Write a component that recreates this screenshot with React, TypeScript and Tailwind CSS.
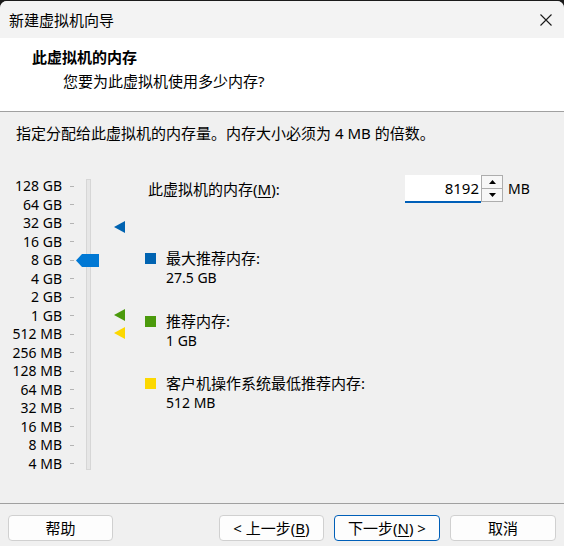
import React from "react";

const font = { fontFamily: '"Noto Sans", "Noto Sans CJK SC", sans-serif' };

const scale = [
  "128 GB", "64 GB", "32 GB", "16 GB", "8 GB", "4 GB", "2 GB", "1 GB",
  "512 MB", "256 MB", "128 MB", "64 MB", "32 MB", "16 MB", "8 MB", "4 MB",
];

function Tri({ color, top }: { color: string; top: string }) {
  return (
    <svg className={`absolute left-[114px] ${top}`} width="11" height="12" viewBox="0 0 11 12">
      <polygon points="0,6 11,0 11,12" fill={color} />
    </svg>
  );
}

function Legend({ color, label, value, mt }: { color: string; label: string; value: string; mt: string }) {
  return (
    <div className={`flex ${mt}`}>
      <div className={`w-[11px] h-[11px] mt-[5px] ${color}`} />
      <div className="ml-[10px] flex flex-col">
        <div className="h-[20px] leading-[20px]">{label}</div>
        <div className="h-[20px] leading-[20px] text-[14px]">{value}</div>
      </div>
    </div>
  );
}

function Btn({ children, w, primary }: { children: React.ReactNode; w: string; primary?: boolean }) {
  return (
    <div
      className={`${w} h-[26px] rounded-[4px] border ${
        primary ? "border-[#005fb8]" : "border-[#d0d0d0]"
      } bg-[#fdfdfd] flex items-center justify-center leading-[20px]`}
    >
      {children}
    </div>
  );
}

export default function App() {
  return (
    <div className="w-[564px] h-[546px] bg-[#1a1a1a] overflow-hidden text-[15px] text-black" style={font}>
      <div className="mt-px h-[545px] rounded-t-[7px] overflow-hidden bg-[#f0f0f0] flex flex-col">
        {/* title bar */}
        <div className="h-[37px] bg-[#f3f3f3] flex items-center justify-between pl-[9px]">
          <span className="leading-[20px]">新建虚拟机向导</span>
          <div className="w-[36px] h-full flex items-center justify-center">
            <svg width="12" height="12" viewBox="0 0 12 12">
              <path d="M0.5 0.5 L11.5 11.5 M11.5 0.5 L0.5 11.5" stroke="#1a1a1a" strokeWidth="1.1" />
            </svg>
          </div>
        </div>
        {/* header */}
        <div className="h-[74px] bg-white border-b border-[#a0a0a0] pt-[9px] flex flex-col">
          <div className="pl-[32px] font-bold leading-[20px]">此虚拟机的内存</div>
          <div className="pl-[63px] mt-[4px] leading-[20px]">您要为此虚拟机使用多少内存?</div>
        </div>
        {/* body */}
        <div className="flex-1 flex flex-col">
          <div className="pl-[16px] pt-[11px] leading-[20px]">
            指定分配给此虚拟机的内存量。内存大小必须为 4 MB 的倍数。
          </div>
          <div className="mt-[32px] flex">
            {/* scale */}
            <div className="relative w-[145px] pt-[2px]">
              <div className="flex flex-col">
                {scale.map((s) => (
                  <div key={s} className="h-[18.5px] flex items-center">
                    <span className="w-[62px] text-right text-[14px] leading-[18px] whitespace-nowrap">{s}</span>
                    <span className="ml-[8px] w-[4px] h-px bg-[#b4b4b4]" />
                  </div>
                ))}
              </div>
              <div className="absolute left-[86px] top-[4px] w-[5px] h-[291px] border border-[#d6d6d6] bg-[#e6e6e6]" />
              <svg className="absolute left-[76px] top-[79px]" width="23" height="13" viewBox="0 0 23 13">
                <polygon points="0,6.5 6,0 23,0 23,13 6,13" fill="#0078d4" />
              </svg>
              <Tri color="#0063b1" top="top-[46px]" />
              <Tri color="#4b9a0c" top="top-[134px]" />
              <Tri color="#fcd800" top="top-[152px]" />
            </div>
            {/* right */}
            <div className="flex flex-col">
              <div className="flex items-center h-[28px]">
                <div className="ml-[3px] w-[257px] leading-[20px]">
                  此虚拟机的内存(<span className="underline underline-offset-2">M</span>):
                </div>
                <div className="w-[76px] h-[28px] bg-white border-b-2 border-[#005fb8] flex items-center justify-end pr-[2px] leading-[20px]">
                  8192
                </div>
                <div className="w-[22px] h-[27px] self-start border border-[#adadad] bg-[#f7f7f7] flex flex-col">
                  <div className="flex-1 flex items-center justify-center border-b border-[#adadad]">
                    <svg width="7" height="4" viewBox="0 0 7 4">
                      <polygon points="0,4 3.5,0 7,4" fill="#000" />
                    </svg>
                  </div>
                  <div className="flex-1 flex items-center justify-center">
                    <svg width="7" height="4" viewBox="0 0 7 4">
                      <polygon points="0,0 7,0 3.5,4" fill="#000" />
                    </svg>
                  </div>
                </div>
                <span className="ml-[5px] text-[14px] leading-[20px]">MB</span>
              </div>
              <Legend color="bg-[#0063b1]" label="最大推荐内存:" value="27.5 GB" mt="mt-[45px]" />
              <Legend color="bg-[#4b9a0c]" label="推荐内存:" value="1 GB" mt="mt-[23px]" />
              <Legend color="bg-[#fcd800]" label="客户机操作系统最低推荐内存:" value="512 MB" mt="mt-[22px]" />
            </div>
          </div>
        </div>
        {/* footer */}
        <div className="h-[43px] border-t border-[#a0a0a0] px-[8px] pt-[11px] flex">
          <Btn w="w-[105px]">帮助</Btn>
          <div className="flex-1" />
          <div className="flex gap-[10px]">
            <Btn w="w-[105px]">
              &lt; 上一步(<span className="underline underline-offset-2">B</span>)
            </Btn>
            <Btn w="w-[106px]" primary>
              下一步(<span className="underline underline-offset-2">N</span>) &gt;
            </Btn>
            <Btn w="w-[106px]">取消</Btn>
          </div>
        </div>
      </div>
    </div>
  );
}
